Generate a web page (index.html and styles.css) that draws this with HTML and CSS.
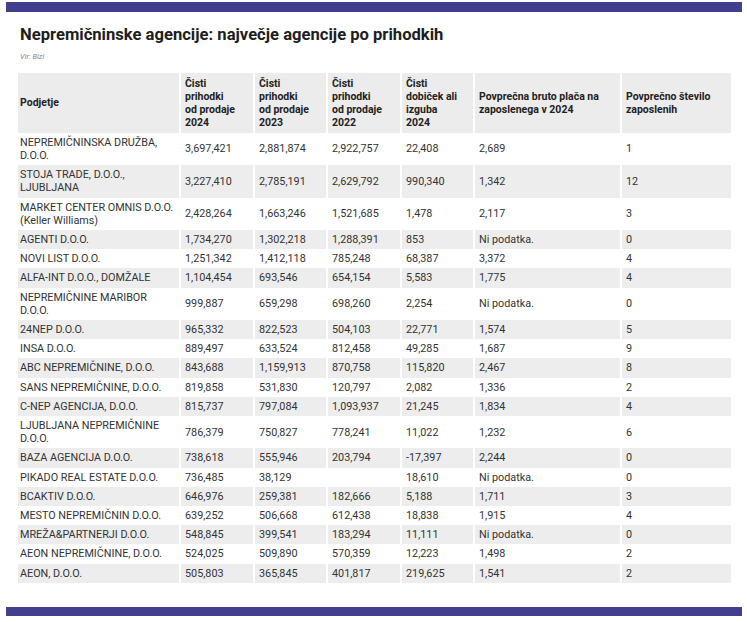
FILE: index.html
```html
<!DOCTYPE html>
<html lang="sl">
<head>
<meta charset="utf-8">
<title>Nepremičninske agencije</title>
<link rel="stylesheet" href="styles.css">
</head>
<body>
<div class="bar"></div>
<main class="chart">
  <h1 class="title">Nepremičninske agencije: največje agencije po prihodkih</h1>
  <p class="source">Vir: Bizi</p>
  <table class="data">
    <colgroup>
      <col class="c1"><col class="c2"><col class="c3"><col class="c4"><col class="c5"><col class="c6"><col class="c7">
    </colgroup>
    <thead>
      <tr>
        <th>Podjetje</th>
        <th>Čisti<br>prihodki<br>od prodaje<br>2024</th>
        <th>Čisti<br>prihodki<br>od prodaje<br>2023</th>
        <th>Čisti<br>prihodki<br>od prodaje<br>2022</th>
        <th>Čisti<br>dobiček ali<br>izguba<br>2024</th>
        <th>Povprečna bruto plača na zaposlenega v 2024</th>
        <th>Povprečno število zaposlenih</th>
      </tr>
    </thead>
    <tbody>
      <tr><td>NEPREMIČNINSKA DRUŽBA, D.O.O.</td><td>3,697,421</td><td>2,881,874</td><td>2,922,757</td><td>22,408</td><td>2,689</td><td>1</td></tr>
      <tr><td>STOJA TRADE, D.O.O., LJUBLJANA</td><td>3,227,410</td><td>2,785,191</td><td>2,629,792</td><td>990,340</td><td>1,342</td><td>12</td></tr>
      <tr><td>MARKET CENTER OMNIS D.O.O. (Keller Williams)</td><td>2,428,264</td><td>1,663,246</td><td>1,521,685</td><td>1,478</td><td>2,117</td><td>3</td></tr>
      <tr><td>AGENTI D.O.O.</td><td>1,734,270</td><td>1,302,218</td><td>1,288,391</td><td>853</td><td>Ni podatka.</td><td>0</td></tr>
      <tr><td>NOVI LIST D.O.O.</td><td>1,251,342</td><td>1,412,118</td><td>785,248</td><td>68,387</td><td>3,372</td><td>4</td></tr>
      <tr><td>ALFA-INT D.O.O., DOMŽALE</td><td>1,104,454</td><td>693,546</td><td>654,154</td><td>5,583</td><td>1,775</td><td>4</td></tr>
      <tr><td>NEPREMIČNINE MARIBOR<br>D.O.O.</td><td>999,887</td><td>659,298</td><td>698,260</td><td>2,254</td><td>Ni podatka.</td><td>0</td></tr>
      <tr><td>24NEP D.O.O.</td><td>965,332</td><td>822,523</td><td>504,103</td><td>22,771</td><td>1,574</td><td>5</td></tr>
      <tr><td>INSA D.O.O.</td><td>889,497</td><td>633,524</td><td>812,458</td><td>49,285</td><td>1,687</td><td>9</td></tr>
      <tr><td>ABC NEPREMIČNINE, D.O.O.</td><td>843,688</td><td>1,159,913</td><td>870,758</td><td>115,820</td><td>2,467</td><td>8</td></tr>
      <tr><td>SANS NEPREMIČNINE, D.O.O.</td><td>819,858</td><td>531,830</td><td>120,797</td><td>2,082</td><td>1,336</td><td>2</td></tr>
      <tr><td>C-NEP AGENCIJA, D.O.O.</td><td>815,737</td><td>797,084</td><td>1,093,937</td><td>21,245</td><td>1,834</td><td>4</td></tr>
      <tr><td>LJUBLJANA NEPREMIČNINE D.O.O.</td><td>786,379</td><td>750,827</td><td>778,241</td><td>11,022</td><td>1,232</td><td>6</td></tr>
      <tr><td>BAZA AGENCIJA D.O.O.</td><td>738,618</td><td>555,946</td><td>203,794</td><td>-17,397</td><td>2,244</td><td>0</td></tr>
      <tr><td>PIKADO REAL ESTATE D.O.O.</td><td>736,485</td><td>38,129</td><td></td><td>18,610</td><td>Ni podatka.</td><td>0</td></tr>
      <tr><td>BCAKTIV D.O.O.</td><td>646,976</td><td>259,381</td><td>182,666</td><td>5,188</td><td>1,711</td><td>3</td></tr>
      <tr><td>MESTO NEPREMIČNIN D.O.O.</td><td>639,252</td><td>506,668</td><td>612,438</td><td>18,838</td><td>1,915</td><td>4</td></tr>
      <tr><td>MREŽA&amp;PARTNERJI D.O.O.</td><td>548,845</td><td>399,541</td><td>183,294</td><td>11,111</td><td>Ni podatka.</td><td>0</td></tr>
      <tr><td>AEON NEPREMIČNINE, D.O.O.</td><td>524,025</td><td>509,890</td><td>570,359</td><td>12,223</td><td>1,498</td><td>2</td></tr>
      <tr><td>AEON, D.O.O.</td><td>505,803</td><td>365,845</td><td>401,817</td><td>219,625</td><td>1,541</td><td>2</td></tr>
    </tbody>
  </table>
</main>
<div class="bar bar-bottom"></div>
</body>
</html>
```

FILE: styles.css
```css
* { box-sizing: border-box; }
html, body { margin: 0; padding: 0; background: #fff; }
body {
  font-family: Roboto, "Liberation Sans", sans-serif;
  color: #333;
  width: 747px;
}
.bar {
  height: 10px;
  margin: 2px 5px 0 6px;
  background: #413f8e;
}
.bar-bottom {
  margin-top: 24px;
  height: 9px;
}
.chart {
  padding: 0 16px 0 18px;
}
.title {
  margin: 13px 0 0 2px;
  font-size: 16.6px;
  line-height: 20px;
  font-weight: 700;
  color: #1d1d1d;
}
.source {
  margin: 7px 0 0 2px;
  font-size: 7.5px;
  line-height: 10px;
  font-style: italic;
  color: #888;
}
.data {
  margin-top: 11px;
  width: 713px;
  border-collapse: collapse;
  table-layout: fixed;
  font-size: 10.8px;
  line-height: 13.2px;
}
.c1 { width: 162px; }
.c2 { width: 74px; }
.c3 { width: 73px; }
.c4 { width: 74px; }
.c5 { width: 73px; }
.c6 { width: 147px; }
.c7 { width: 110px; }
.data th, .data td {
  text-align: left;
  vertical-align: middle;
  padding: 3px 4px;
  border-left: 2px solid #fff;
}
.data th:first-child, .data td:first-child {
  border-left: 0;
  padding-left: 2px;
  padding-right: 2px;
}
.data thead th {
  background: #ececec;
  font-size: 10.5px;
  font-weight: 700;
  color: #222;
  padding-top: 3.5px;
  padding-bottom: 3.5px;
}
.data tbody tr:nth-child(even) td {
  background: #ededed;
}
```
